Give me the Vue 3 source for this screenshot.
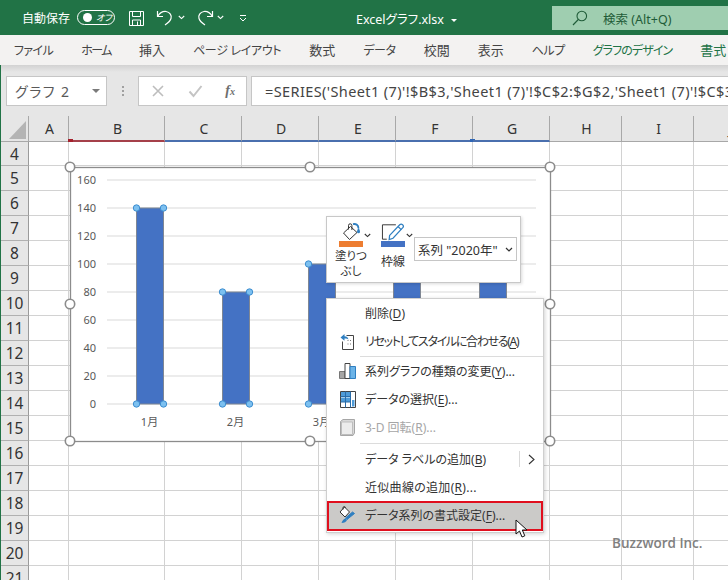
<script setup>
// ls = letter spacing that brings the kana tabs to the width Excel gives them
const tabs = [
  { text: 'ファイル', kana: true, ls: -0.6 },
  { text: 'ホーム', kana: true, ls: -1.5 },
  { text: '挿入' },
  { text: 'ページ レイアウト', kana: true, ls: -0.3 },
  { text: '数式' },
  { text: 'データ', kana: true, ls: -0.4 },
  { text: '校閲' },
  { text: '表示' },
  { text: 'ヘルプ', kana: true, ls: -0.5 },
  { text: 'グラフのデザイン', kana: true, ls: -0.9, chart: true },
  { text: '書式', chart: true }
]

const columns = [
  { name: 'A', width: 40 },
  { name: 'B', width: 96, mark: 'red' },
  { name: 'C', width: 77, mark: 'blue' },
  { name: 'D', width: 77, mark: 'blue' },
  { name: 'E', width: 77, mark: 'blue' },
  { name: 'F', width: 77, mark: 'blue' },
  { name: 'G', width: 77, mark: 'blue' },
  { name: 'H', width: 72 },
  { name: 'I', width: 72 },
  { name: 'J', width: 72 }
]

const rows = Array.from({ length: 18 }, (_, i) => i + 4)

// chart geometry, in page pixels
const axis = [160, 140, 120, 100, 80, 60, 40, 20, 0]
const valueY = (v) => 404 - v * 1.4
const bars = [
  { label: '1月', x: 136.5, value: 140 },
  { label: '2月', x: 222.5, value: 80 },
  { label: '3月', x: 308.5, value: 100 },
  { label: '4月', x: 393.5, value: 120 },
  { label: '5月', x: 479.5, value: 100 }
]
const handles = [[70, 167], [310, 167], [550, 167], [70, 304], [550, 304], [70, 441], [310, 441], [550, 441]]
</script>

<template>
  <div class="excel">
    <header class="titlebar">
      <span class="autosave">自動保存</span>
      <span class="toggle"><i class="knob"></i><em>オフ</em></span>
      <svg class="qat save" width="17" height="17" viewBox="0 0 17 17" fill="none" stroke="#fff" stroke-width="1">
        <path d="M1.5 1.5h14v14h-14z" />
        <path d="M4.5 1.5v5h8v-5M4.5 15.5v-5.5h8v5.5M9.5 11.5v4" />
      </svg>
      <svg class="qat undo" width="18" height="18" viewBox="0 0 18 18" fill="none" stroke="#fff" stroke-width="1.2">
        <path d="M1.5 2v5.5H7" />
        <path d="M1.5 7.5C4 3.5 7 2.2 10 2.5c4 .6 6 4 5 7-.8 2.5-3 4.5-6 6.5" />
      </svg>
      <svg class="chev c1" width="7" height="5" viewBox="0 0 7 5" fill="none" stroke="#fff" stroke-width="1.1"><path d="M.8 1l2.700 2.600L6.200 1" /></svg>
      <svg class="qat redo" width="18" height="18" viewBox="0 0 18 18" fill="none" stroke="#fff" stroke-width="1.2">
        <path d="M16.500 2v5.500H11" />
        <path d="M16.500 7.500C14 3.500 11 2.200 8 2.500c-4 .6-6 4-5 7 .8 2.500 3 4.500 6 6.500" />
      </svg>
      <svg class="chev c2" width="7" height="5" viewBox="0 0 7 5" fill="none" stroke="#fff" stroke-width="1.1"><path d="M.8 1l2.700 2.600L6.200 1" /></svg>
      <svg class="chev c3" width="8" height="8" viewBox="0 0 8 8" fill="none" stroke="#fff" stroke-width="1"><path d="M1 1.500h6M1 4l3 3 3-3" /></svg>
      <span class="filename">Excelグラフ.xlsx<i class="caret"></i></span>
      <div class="search">
        <svg width="16" height="16" viewBox="0 0 16 16" fill="none" stroke="#1f5c38" stroke-width="1.1">
          <circle cx="9.800" cy="6" r="4.800" />
          <path d="M6.300 9.500L1 15" />
        </svg>
        <span>検索 (Alt+Q)</span>
      </div>
    </header>

    <nav class="tabs">
      <span
        v-for="tab in tabs"
        :key="tab.text"
        class="tab"
        :class="{ chart: tab.chart, kana: tab.kana }"
        :style="tab.ls ? { letterSpacing: tab.ls + 'px' } : null"
      >{{ tab.text }}</span>
    </nav>

    <div class="formula-area">
      <div class="namebox">
        <span>グラフ 2</span>
        <i class="name-caret"></i>
      </div>
      <div class="dots"><i></i><i></i><i></i></div>
      <div class="fx-box">
        <svg width="14" height="14" viewBox="0 0 14 14" stroke="#bdbdbd" stroke-width="1.600"><path d="M2 2l10 10M12 2L2 12" /></svg>
        <svg width="15" height="14" viewBox="0 0 15 14" fill="none" stroke="#c4c4c4" stroke-width="2"><path d="M1.500 7.500l4 4.500 8-10" /></svg>
        <span class="fx">f<small>x</small></span>
      </div>
      <div class="formula">=SERIES('Sheet1 (7)'!$B$3,'Sheet1 (7)'!$C$2:$G$2,'Sheet1 (7)'!$C$3:$G$3,1)</div>
    </div>

    <div class="sheet">
      <div class="col-head">
        <div class="corner"><i></i></div>
        <div
          v-for="col in columns"
          :key="col.name"
          class="col"
          :class="col.mark"
          :style="{ width: col.width + 'px' }"
        >{{ col.name }}</div>
      </div>
      <div v-for="row in rows" :key="row" class="row" :class="{ short: row === 4 }">
        <div class="row-num">{{ row }}</div>
        <div v-for="col in columns" :key="col.name" class="cell" :style="{ width: col.width + 'px' }"></div>
      </div>
    </div>

    <svg class="chart-svg" width="492" height="286" viewBox="64 161 492 286">
      <rect x="70.500" y="167.500" width="480" height="274" fill="#fff" stroke="#8c8c8c" stroke-width="1.300" />
      <g v-for="v in axis" :key="v">
        <line x1="107" x2="536" :y1="valueY(v)" :y2="valueY(v)" stroke="#d9d9d9" />
        <text x="96" :y="valueY(v) + 4" text-anchor="end" class="chart-text">{{ v }}</text>
      </g>
      <g v-for="bar in bars" :key="bar.label">
        <rect :x="bar.x" :y="valueY(bar.value)" width="27" :height="bar.value * 1.4" fill="#4472c4" stroke="#7f8794" />
        <circle :cx="bar.x" :cy="valueY(bar.value)" r="3.200" class="point" />
        <circle :cx="bar.x + 27" :cy="valueY(bar.value)" r="3.200" class="point" />
        <circle :cx="bar.x" cy="404" r="3.200" class="point" />
        <circle :cx="bar.x + 27" cy="404" r="3.200" class="point" />
        <text :x="bar.x + 13" y="426" text-anchor="middle" class="chart-text">{{ bar.label }}</text>
      </g>
      <circle v-for="h in handles" :key="h.join()" :cx="h[0]" :cy="h[1]" r="4.700" fill="#fff" stroke="#8c8c8c" stroke-width="1.600" />
    </svg>

    <div class="mini-bar">
      <div class="mini-btn fill">
        <div class="mini-icon">
          <svg width="19" height="18" viewBox="0 0 19 18" fill="none" stroke="#333" stroke-width="1">
            <path d="M8.500 3.500L1.500 10l6 6.500 7.500-7z" fill="#fff" />
            <path d="M6.500 6.500V2.500a1.700 1.700 0 0 1 3.400 0V7" />
            <path d="M11 1.200c3-.8 5.500 1 5.500 4.300" stroke="#2f7fc1" stroke-width="1.800" />
            <path d="M16.500 5c1 1.500 1.500 2.700 1.500 3.700a1.500 1.500 0 0 1-3 0c0-1 .5-2.200 1.500-3.700z" fill="#2f7fc1" stroke="none" />
          </svg>
          <svg class="mini-chev" width="7" height="5" viewBox="0 0 7 5" fill="none" stroke="#333" stroke-width="1.100"><path d="M.8 1l2.700 2.600L6.200 1" /></svg>
        </div>
        <i class="swatch orange"></i>
        <span class="mini-label">塗りつ<br />ぶし</span>
      </div>
      <div class="mini-btn line">
        <div class="mini-icon">
          <svg width="25" height="18" viewBox="0 0 25 18" fill="none">
            <path d="M6 16.500H1.500V1.500h14" stroke="#333" />
            <path d="M9 12.500L19.500 1.500c1-.8 2-.8 3 0s1 2 .2 3L12.500 15.500l-4 1.300z" fill="#fff" stroke="#2f7fc1" stroke-width="1.300" />
            <path d="M18 3.500l3 3" stroke="#2f7fc1" stroke-width="1.300" />
          </svg>
          <svg class="mini-chev" width="7" height="5" viewBox="0 0 7 5" fill="none" stroke="#333" stroke-width="1.100"><path d="M.8 1l2.700 2.600L6.200 1" /></svg>
        </div>
        <i class="swatch blue"></i>
        <span class="mini-label">枠線</span>
      </div>
      <div class="series-select">
        <span>系列 "2020年"</span>
        <svg width="8" height="5" viewBox="0 0 8 5" fill="none" stroke="#333" stroke-width="1.200"><path d="M1 1l3 3 3-3" /></svg>
      </div>
    </div>

    <div class="menu">
      <div class="item"><span class="icon"></span><span>削除(<u>D</u>)</span></div>
      <div class="item">
        <span class="icon">
          <svg width="16" height="17" viewBox="0 0 16 17" fill="none">
            <path d="M6.500 2.500h7v14H2.500v-8" stroke="#444" />
            <path d="M7.500 7.500h1M10 7.500h1M7.500 11h1M10 11h1" stroke="#777" />
            <path d="M.5 4.500L4.500 1v2.200c2 0 3.500 1 4 3.300-1-1-2.500-1.300-4-1v2.200z" fill="#2f7fc1" />
          </svg>
        </span>
        <span class="tight">リセットしてスタイルに合わせる(<u>A</u>)</span>
      </div>
      <div class="sep"></div>
      <div class="item">
        <span class="icon">
          <svg width="17" height="16" viewBox="0 0 17 16">
            <path d="M.5 8.500h5.500v7H.5z" fill="#a6a6a6" stroke="#777" />
            <path d="M6 .5h5v15H6z" fill="#fff" stroke="#444" />
            <path d="M11 3.500h5.500v12H11z" fill="#6cb4e8" stroke="#2f7fc1" />
          </svg>
        </span>
        <span>系列グラフの種類の変更(<u>Y</u>)...</span>
      </div>
      <div class="item">
        <span class="icon">
          <svg width="16" height="17" viewBox="0 0 16 17" fill="none">
            <path d="M.5.500h15v16H.5z" fill="#fff" stroke="#444" />
            <path d="M1 1h9v5H1zM1 6.500h4v4.500H1zM5.500 6.500h4.500v4.500H5.500z" fill="#4e9bd8" />
            <path d="M.5 5.500h10M.5 11h10M5.500.5v16M10.500.5v16" stroke="#2a6ca8" />
            <path d="M12 9h2.500v6.500H12z" fill="#4e9bd8" />
          </svg>
        </span>
        <span>データの選択(<u>E</u>)...</span>
      </div>
      <div class="item off">
        <span class="icon">
          <svg width="15" height="17" viewBox="0 0 15 17">
            <path d="M.5 2.500L3 .5h11.500v13.500l-1.500 2.500H.5z" fill="#d9d9d9" stroke="#a6a6a6" />
            <path d="M1.500 3h11v12.500h-11z" fill="#ececec" stroke="#bdbdbd" />
          </svg>
        </span>
        <span>3-D 回転(<u>R</u>)...</span>
      </div>
      <div class="sep wide"></div>
      <div class="item">
        <span class="icon"></span>
        <span>データ ラベルの追加(<u>B</u>)</span>
        <span class="sub">
          <svg width="7" height="11" viewBox="0 0 7 11" fill="none" stroke="#333" stroke-width="1.100"><path d="M1 1l5 4.500L1 10" /></svg>
        </span>
      </div>
      <div class="item"><span class="icon"></span><span class="wide-text">近似曲線の追加(<u>R</u>)...</span></div>
      <div class="item active">
        <span class="icon">
          <svg width="17" height="18" viewBox="0 0 17 18" fill="none">
            <path d="M5.500 1L1 6l5 5 4.500-5z" fill="#fff" stroke="#333" />
            <path d="M4 3.500V1.800a1.200 1.200 0 0 1 2.400 0" stroke="#333" />
            <path d="M15.500 7.500L8 13.500l-1.500-1.500 7-6z" fill="#2f7fc1" stroke="#2f7fc1" />
            <path d="M6.500 12.500c-2 .5-3 2-4 4.500 2.800 0 4.800-1 5.500-3z" fill="#2f7fc1" />
          </svg>
        </span>
        <span>データ系列の書式設定(<u>F</u>)...</span>
      </div>
    </div>

    <svg class="cursor" width="14" height="20" viewBox="0 0 14 20">
      <path d="M1 1v14l3.500-3 2.500 6 2.800-1.200-2.500-5.800H12z" fill="#fff" stroke="#111" stroke-width="1" />
    </svg>

    <span class="watermark">Buzzword Inc.</span>
  </div>
</template>

<style scoped>
.excel {
  position: relative;
  width: 728px;
  height: 580px;
  overflow: hidden;
  display: flex;
  flex-direction: column;
  background: #fff;
  font-family: "Noto Sans", "Noto Sans CJK JP", sans-serif;
  color: #262626;
  font-feature-settings: "palt";
}

/* title bar */
.titlebar {
  position: relative;
  height: 35px;
  flex: none;
  background: #217346;
  color: #fff;
  font-size: 12px;
}
.titlebar > * {
  position: absolute;
}
.autosave {
  left: 22px;
  top: 9px;
}
.toggle {
  left: 77px;
  top: 10px;
  width: 38px;
  height: 15px;
  box-sizing: border-box;
  border: 1px solid #fff;
  border-radius: 8px;
}
.knob {
  position: absolute;
  left: 5px;
  top: 2px;
  width: 9px;
  height: 9px;
  border-radius: 50%;
  background: #fff;
}
.toggle em {
  position: absolute;
  left: 18px;
  top: 0;
  font-size: 9px;
  line-height: 13px;
}
.save { left: 128px; top: 10px; }
.undo { left: 156px; top: 9px; }
.c1 { left: 178px; top: 15px; }
.redo { left: 196px; top: 9px; }
.c2 { left: 217px; top: 15px; }
.c3 { left: 239px; top: 14px; }
.filename {
  left: 356px;
  top: 9px;
  font-size: 12.5px;
}
.caret {
  display: inline-block;
  margin-left: 7px;
  vertical-align: 2px;
  border: 3px solid transparent;
  border-top: 3px solid #fff;
  border-bottom: 0;
}
.search {
  left: 552px;
  top: 6px;
  width: 176px;
  height: 24px;
  background: #9fceb0;
  display: flex;
  align-items: center;
  gap: 15px;
  padding-left: 20px;
  box-sizing: border-box;
  color: #1f5c38;
  font-size: 12.5px;
}

/* ribbon tabs */
.tabs {
  height: 30px;
  flex: none;
  box-sizing: border-box;
  display: flex;
  align-items: center;
  gap: 28px;
  padding: 0 0 1px 14px;
  background: #f3f2f1;
  font-size: 13px;
  white-space: nowrap;
  color: #444;
}
.tab {
  flex: none;
}
.tab.kana {
  font-size: 12px;
}
.tab.chart {
  color: #217346;
}

/* formula bar */
.formula-area {
  height: 51px;
  flex: none;
  box-sizing: border-box;
  display: flex;
  padding: 11px 0 10px 5px;
  background: linear-gradient(#d2d2d2, #e6e6e6 7px);
  border-left: 1px solid #217346;
}
.namebox,
.fx-box,
.formula {
  flex: none;
  box-sizing: border-box;
  height: 30px;
  background: #fff;
  border: 1px solid #c6c6c6;
  display: flex;
  align-items: center;
}
.namebox {
  width: 101px;
  padding: 0 6px 0 8px;
  justify-content: space-between;
  font-size: 14px;
  color: #595959;
  letter-spacing: 1.5px;
}
.name-caret {
  border: 4px solid transparent;
  border-top: 4px solid #7a7a7a;
  border-bottom: 0;
}
.dots {
  flex: none;
  width: 31px;
  display: flex;
  flex-direction: column;
  align-items: center;
  justify-content: center;
  gap: 2px;
}
.dots i {
  width: 2px;
  height: 2px;
  background: #a0a0a0;
}
.fx-box {
  width: 109px;
  padding: 0 11px 0 12px;
  justify-content: space-between;
}
.fx {
  font-family: "Liberation Serif", serif;
  font-style: italic;
  font-weight: 700;
  font-size: 14px;
  color: #6e6e6e;
}
.fx small {
  font-size: 10px;
}
.formula {
  width: 480px;
  margin-left: 4px;
  padding-left: 13px;
  font-size: 14.5px;
  letter-spacing: 0.4px;
  color: #444;
  white-space: nowrap;
  overflow: hidden;
}

/* sheet */
.sheet {
  flex: 1;
  min-height: 0;
  border-left: 1px solid #217346;
}
.col-head {
  display: flex;
  height: 26px;
  background: #e6e6e6;
  font-size: 14px;
  color: #333;
}
.corner {
  flex: none;
  width: 28px;
  box-sizing: border-box;
  border-right: 1px solid #a8a8a8;
  position: relative;
  border-bottom: 1px solid #a8a8a8;
}
.corner i {
  position: absolute;
  left: 8px;
  top: 5px;
  border-style: solid;
  border-width: 0 0 18px 17px;
  border-color: transparent transparent #b4b4b4 transparent;
}
.col {
  flex: none;
  box-sizing: border-box;
  display: flex;
  align-items: center;
  justify-content: center;
  padding-left: 2px;
  border-right: 1px solid #a8a8a8;
  border-bottom: 1px solid #a8a8a8;
  position: relative;
}
.col.red {
  border-bottom: 2px solid #a5404a;
}
.col.blue {
  border-bottom: 2px solid #4a6fae;
}
.col.red::before,
.col.blue:nth-child(3)::before,
.col.blue:nth-child(7)::after {
  content: "";
  position: absolute;
  bottom: -2px;
  width: 5px;
  height: 3px;
}
.col.red::before {
  left: -1px;
  background: #a5202c;
}
.col.blue:nth-child(3)::before {
  left: -2px;
  background: #2f66b5;
}
.col.blue:nth-child(7)::after {
  right: -3px;
  background: #2f66b5;
}
.row {
  display: flex;
  height: 25px;
}
.row.short {
  height: 24px;
}
.row-num {
  flex: none;
  width: 28px;
  box-sizing: border-box;
  display: flex;
  align-items: center;
  justify-content: center;
  background: #e6e6e6;
  border-right: 1px solid #9a9a9a;
  border-bottom: 1px solid #b0b0b0;
  font-size: 15.5px;
  color: #333;
}
.cell {
  flex: none;
  box-sizing: border-box;
  border-right: 1px solid #d2d2d2;
  border-bottom: 1px solid #d2d2d2;
}

/* chart, drawn over the cells */
.chart-svg {
  position: absolute;
  left: 64px;
  top: 161px;
}
.chart-text {
  font-size: 11px;
  fill: #595959;
  font-family: "Noto Sans", "Noto Sans CJK JP", sans-serif;
}
.point {
  fill: #7cc0f0;
  stroke: #3e8ed0;
  stroke-width: 1;
}

/* mini toolbar */
.mini-bar {
  position: absolute;
  left: 326px;
  top: 216px;
  width: 195px;
  height: 67px;
  box-sizing: border-box;
  background: #fff;
  border: 1px solid #c8c8c8;
  box-shadow: 1px 1px 3px rgba(0, 0, 0, 0.15);
  display: flex;
  padding: 5px 0 0 12px;
  font-size: 12px;
  color: #333;
}
.mini-btn {
  flex: none;
  display: flex;
  flex-direction: column;
  align-items: center;
  width: 24px;
}
.mini-btn.line {
  margin-left: 18px;
}
.mini-icon {
  position: relative;
  height: 19px;
  width: 100%;
  display: flex;
  justify-content: center;
  align-items: flex-end;
}
.mini-chev {
  position: absolute;
  left: 100%;
  top: 11px;
  margin-left: 1px;
}
.swatch {
  width: 100%;
  height: 6px;
  flex: none;
}
.swatch.orange {
  background: #ed7d31;
}
.swatch.blue {
  background: #4472c4;
}
.mini-label {
  margin-top: 1px;
  font-size: 11.5px;
  text-align: center;
  line-height: 15px;
  white-space: nowrap;
}
.line .mini-label {
  margin-top: 6px;
  font-size: 12px;
  line-height: 18px;
}
.series-select {
  flex: none;
  box-sizing: border-box;
  width: 103px;
  height: 24px;
  margin: 15px 0 0 9px;
  padding: 0 3px;
  border: 1px solid #c6c6c6;
  display: flex;
  align-items: center;
  justify-content: space-between;
  font-size: 12.5px;
  white-space: nowrap;
}

/* context menu */
.menu {
  position: absolute;
  left: 326px;
  top: 298px;
  width: 218px;
  box-sizing: border-box;
  padding: 0 0 1px;
  background: #fff;
  border: 1px solid #cfcfcf;
  box-shadow: 1px 1px 4px rgba(0, 0, 0, 0.18);
  font-size: 12px;
  color: #333;
}
.item {
  display: flex;
  align-items: center;
  height: 28px;
  white-space: nowrap;
}
.icon {
  flex: none;
  width: 38px;
  display: flex;
  justify-content: center;
  padding-left: 3px;
  box-sizing: border-box;
}
.tight {
  letter-spacing: -1.3px;
}
.wide-text {
  letter-spacing: 0.3px;
}
.item u {
  text-underline-offset: 2px;
}
.item.off {
  color: #a6a6a6;
}
.item.active {
  height: 30px;
  box-sizing: border-box;
  padding-bottom: 2px;
  background: #cbcac8;
  outline: 2px solid #e00f1e;
  outline-offset: -2px;
}
.sep {
  height: 1px;
  margin: 1px 0 0 33px;
  background: #dcdcdc;
}
.sep.wide {
  margin: 2px 0 1px 33px;
}
.sub {
  margin-left: auto;
  margin-right: 8px;
  padding-left: 8px;
  height: 16px;
  border-left: 1px solid #d9d9d9;
  display: flex;
  align-items: center;
}

.cursor {
  position: absolute;
  left: 515px;
  top: 519px;
}

.watermark {
  position: absolute;
  left: 612px;
  top: 534px;
  font-family: "Open Sans", sans-serif;
  font-size: 13.500px;
  font-weight: 600;
  color: #808080;
  line-height: 18px;
  white-space: nowrap;
}
</style>
